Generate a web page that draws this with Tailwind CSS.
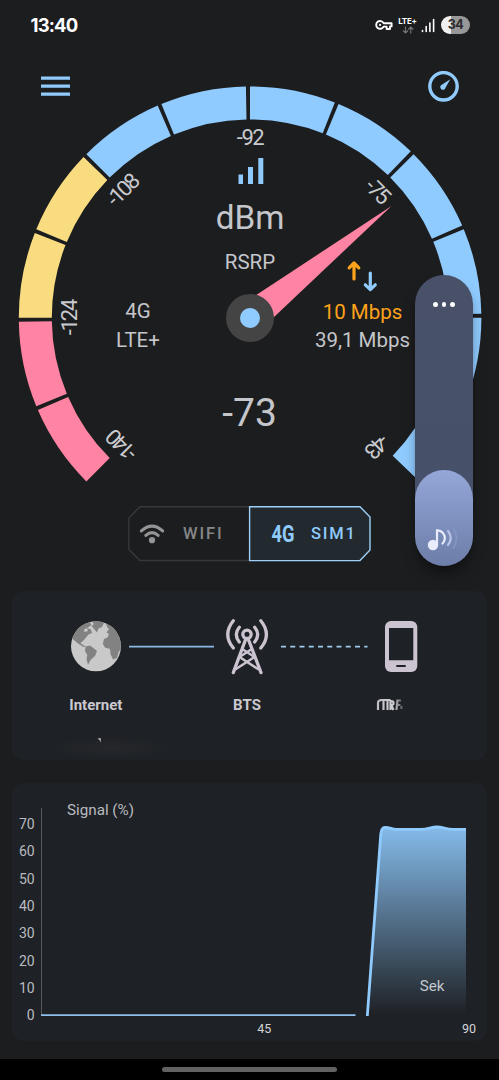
<!DOCTYPE html>
<html lang="en">
<head>
  <meta charset="UTF-8" />
  <meta name="viewport" content="width=device-width, initial-scale=1" />
  <title>Signal meter</title>
  <script src="https://cdn.jsdelivr.net/npm/@tailwindcss/browser@4"></script>
</head>
<body class="bg-[#1c1d1f] font-['Roboto',sans-serif] overflow-hidden">
  <div class="relative w-[499px] h-[1080px] flex flex-col overflow-hidden">

    <!-- Status bar -->
    <div class="h-[50px] shrink-0 flex items-center justify-between pl-[30.5px] pr-[29px]">
      <span class="font-['Inter',sans-serif] font-bold text-[18.5px] tracking-[-0.85px] text-white pt-0.5">13:40</span>
      <div class="flex items-center">
        <svg class="w-[18px] h-3 mr-[5px]" viewBox="0 0 18 12" fill="none" stroke="#fff" stroke-width="1.9" stroke-linejoin="round">
          <path d="M8.6 4.2H16.6V7.4H15V10H11.6V7.6H8.6A3.9 3.9 0 1 1 8.6 4.2Z" />
          <circle cx="5.1" cy="5.9" r="1.1" fill="#fff" stroke="none" />
        </svg>
        <div class="w-[19px] flex flex-col items-center mr-1">
          <span class="font-['Inter',sans-serif] font-bold text-[8px] leading-[8px] tracking-[-0.2px] text-white">LTE+</span>
          <svg class="w-3 h-2 mt-px" viewBox="0 0 12 8" fill="none" stroke="#777" stroke-width="1.1">
            <path d="M3.5 0.5V7M1 4.5L3.5 7L6 4.5M8.8 7.5V1M6.3 3.5L8.8 1L11.3 3.5" />
          </svg>
        </div>
        <svg class="w-[14px] h-[15px] mr-[6px]" viewBox="0 0 14 15" fill="none" stroke="#fff" stroke-width="1.6" stroke-linecap="round">
          <path d="M1.5 12.5V13.5M5.2 8.5V13.5M8.9 5V13.5M12.6 1.5V13.5" />
        </svg>
        <div class="w-[29px] h-[18px] rounded-full bg-linear-to-r from-[#f0f0f0] from-34% to-[#989898] to-34% flex items-center justify-center">
          <span class="font-['Inter',sans-serif] font-bold text-[12.5px] leading-none tracking-[-0.4px] text-[#2a2a2a]">34</span>
        </div>
      </div>
    </div>

    <!-- Header -->
    <div class="h-[58px] shrink-0 flex items-start justify-between pl-[41px] pr-10 pt-[21px]">
      <svg class="w-[29px] h-[21px] mt-[5px]" viewBox="0 0 29 21" stroke="#90cbfb" stroke-width="3.2">
        <path d="M0 2.2H29M0 10.2H29M0 18.2H29" />
      </svg>
      <svg class="w-[31px] h-[31px]" viewBox="0 0 31 31">
        <circle cx="15.5" cy="15.3" r="13.7" fill="none" stroke="#90cbfb" stroke-width="3.4" />
        <path d="M22.3 8.3L17.6 16.6A2.7 2.7 0 1 1 13.8 13.7Z" fill="#90cbfb" />
      </svg>
    </div>

    <!-- Gauge -->
    <svg class="w-[499px] h-[410px] shrink-0 -mt-7" viewBox="0 80 499 410">
      <g fill="none" stroke-width="33" stroke-dasharray="21.5 1">
        <path pathLength="45" stroke="#ff84a3" d="M98.03 469.73A214.8 214.8 0 0 1 35.3 317.8" />
        <path pathLength="45" stroke="#f9dc80" d="M35.3 317.8A214.8 214.8 0 0 1 98.03 165.87" />
        <path pathLength="180" stroke="#90cbff" d="M98.03 165.87A214.8 214.8 0 0 1 401.97 469.73" />
      </g>

      <!-- scale labels -->
      <g fill="#c9cace" font-size="22" text-anchor="middle" letter-spacing="-2.2">
        <text transform="rotate(-135 250 318)" x="250" y="145" letter-spacing="-3">-140</text>
        <text transform="rotate(-90 250 318)" x="250" y="145">-124</text>
        <text transform="rotate(-45 250 318)" x="250" y="145">-108</text>
        <text x="250" y="144.5" letter-spacing="-1.5">-92</text>
        <text transform="rotate(45 250 318)" x="250" y="145.5">-75</text>
        <text transform="rotate(135 250 318)" x="250" y="145" letter-spacing="-3">-43</text>
      </g>

      <path fill="#90cbff" d="M238.5 174.5h4.5V184h-4.5zM248 167h5V184h-5zM258.3 158h5V184h-5z" />

      <g fill="#c5c6cb" text-anchor="middle">
        <text x="250" y="228.5" font-size="33.3">dBm</text>
        <text x="250" y="269" font-size="20.5">RSRP</text>
        <text x="138" y="318.3" font-size="20.5">4G</text>
        <text x="138" y="347" font-size="20.5">LTE+</text>
        <text x="362.5" y="318.5" font-size="20.5" fill="#ffa31a">10 Mbps</text>
        <text x="362.5" y="347" font-size="20.5">39,1 Mbps</text>
        <text x="249.5" y="426.3" font-size="39">-73</text>
      </g>

      <path fill="#ff84a3" d="M391.5 206L259.8 330.4L240.2 305.6Z" />
      <circle cx="250" cy="318" r="24" fill="#444445" />
      <circle cx="250" cy="318" r="10" fill="#90cbff" />

      <g fill="none" stroke-width="3.2" stroke-linecap="round" stroke-linejoin="round">
        <path stroke="#ffa31a" d="M354 279V264M349.2 267.8L354 263L358.8 267.8" />
        <path stroke="#90cbff" d="M370.3 273V289M365.3 284.8L370.3 289.6L375.3 284.8" />
      </g>
    </svg>

    <!-- Network switch -->
    <div class="relative w-[243px] h-[56px] shrink-0 ml-[128px] mt-4 flex">
      <svg class="absolute inset-0 w-[243px] h-[56px]" viewBox="0 0 243 56" fill="none">
        <path d="M121 0.7H12L0.9 12V43.5L12 54.5H121" stroke="#37383a" stroke-width="1.4" />
        <path d="M121.6 0.7H232L242 11V44L232 54.6H121.6Z" fill="#22292f" stroke="#9fd0f7" stroke-width="1.4" />
      </svg>
      <div class="relative w-[121px] flex items-center pl-[11px]">
        <svg class="w-[26px] h-5 mr-[18px]" viewBox="0 0 26 20" fill="none" stroke="#959595" stroke-width="3.1" stroke-linecap="round">
          <path d="M2.4 6.9Q13 -2.8 23.6 6.9M6.9 11.4Q13 6 19.1 11.4" />
          <circle cx="13" cy="16.2" r="3.1" fill="#959595" stroke="none" />
        </svg>
        <span class="text-[16.5px] font-medium tracking-[1.9px] text-[#858688]">WIFI</span>
      </div>
      <div class="relative w-[122px] flex items-center pl-[20px]">
        <svg class="w-[28px] h-7 mr-[14px]" viewBox="0 0 28 28">
          <text x="2.5" y="22" font-size="23" font-weight="700" fill="#90cbfb" textLength="23" lengthAdjust="spacingAndGlyphs">4G</text>
        </svg>
        <span class="text-[16.5px] font-medium tracking-[1.8px] text-[#90cbfb]">SIM1</span>
      </div>
    </div>

    <!-- Connection path -->
    <svg class="w-[475px] h-[169px] shrink-0 ml-3 mt-[29px] rounded-[12px] bg-[#1e2125]" viewBox="12 591 475 169">
      <circle cx="96" cy="646.3" r="25" fill="#c9c9c9" />
      <g fill="#828282">
        <path d="M72.2 638.5Q75.5 629 84.5 624L90 622.2L91.5 625L88 627.5L84 629.5L84.5 632L88 631L87 628L91 629.5L92 633L88.5 634.5L85.5 638L83.5 640.5L80.5 643L83 645L86 646.2L83.5 647L78.5 643.8L75 641Z" />
        <path d="M92 621.6Q97 620.8 104 622.7L102 627L98.5 628.5L97 632.5L94 629L91.5 626L94 624Z" />
        <path d="M106 623.4Q119 629 120.8 643V649L118.7 652L117 658L113 659.5L110.5 654L110 649L105 647.5L102.8 644L104 639L107.5 637.5L109 634L106.5 632.5L109 629L107 627Z" />
        <path d="M85.5 646.5L90 645.5L94 648.5L97 651L95 656L91 659.5L88 664.8L86.5 659L87.3 655L85 651Z" />
      </g>
      <path d="M129 646.6H214" stroke="#8ab9e6" stroke-width="1.7" />
      <path d="M281 646.6H367.5" stroke="#9ecbf0" stroke-width="1.6" stroke-dasharray="5 4.25" />

      <!-- tower -->
      <g fill="none" stroke="#cbc4d0" stroke-width="3.3" stroke-linecap="round" stroke-linejoin="round">
        <circle cx="247" cy="634.3" r="4.2" />
        <path d="M245.6 639.5L233.3 672.6M248.4 639.5L261 672.6" />
        <path stroke-width="2.5" d="M243 649.5L254.5 657L236 669M251 649.5L239.5 657L258 669" />
        <path d="M239.3 627.3Q233.3 634.3 239.3 642M254.7 627.3Q260.7 634.3 254.7 642M233.3 620.8Q222.2 634.5 233.3 648M260.8 620.8Q272 634.5 260.8 648" />
      </g>

      <!-- phone -->
      <rect x="385" y="621" width="32.3" height="51" rx="6" fill="#cbc4d0" />
      <path fill="#1e2125" d="M389 628H413.3V660.3H389ZM396.3 665H405.7V667H396.3Z" />

      <g font-size="15" font-weight="700" fill="#cbc9d0" text-anchor="middle">
        <text x="95.8" y="710">Internet</text>
        <text x="247" y="710">BTS</text>
      </g>

      <!-- hidden names -->
      <defs>
        <linearGradient id="fade" x1="376" x2="405" y1="0" y2="0" gradientUnits="userSpaceOnUse">
          <stop offset="0" stop-color="#bdbcc2" />
          <stop offset="0.6" stop-color="#cfced3" />
          <stop offset="1" stop-color="#3a3c41" />
        </linearGradient>
        <radialGradient id="smudge">
          <stop offset="0" stop-color="#25272b" />
          <stop offset="1" stop-color="#25272b" stop-opacity="0" />
        </radialGradient>
      </defs>
      <path d="M378 710V703Q378 700 382 700H390.5M383.5 701V710M387.5 701V710M390.5 700V710M391 701Q394 701 393.5 704L391.5 705.5L393.5 710M396.5 710L397.5 700.5H401M397 705H400.5M401.5 706V709" fill="none" stroke="url(#fade)" stroke-width="2.2" class="blur-[0.6px]" />
      <ellipse cx="110" cy="748" rx="62" ry="11" fill="url(#smudge)" />
      <path d="M97.5 738.5L100.8 738V742.5L99.5 740Z" fill="#b5b5b7" class="blur-[0.4px]" />
    </svg>

    <!-- Signal chart -->
    <svg class="w-[475px] h-[258px] shrink-0 ml-3 mt-[23px] rounded-[12px] bg-[#1e2125]" viewBox="12 783 475 258">
      <defs>
        <linearGradient id="area" x1="0" x2="0" y1="828" y2="1015" gradientUnits="userSpaceOnUse">
          <stop offset="0" stop-color="#90cbff" stop-opacity="0.9" />
          <stop offset="1" stop-color="#90cbff" stop-opacity="0" />
        </linearGradient>
      </defs>
      <path d="M41.5 808V1015" stroke="#55575b" stroke-width="1" />
      <path d="M41 1015.2H355.5" stroke="#8fbfec" stroke-width="1.8" />
      <path fill="url(#area)" d="M367.3 1016L380.8 834Q381.5 827.5 385 827.5C391 827.5 391 829.3 397 829.3H421C428 829.3 431 827 437 827S446 829.3 453 829.3H466V1016Z" />
      <path fill="none" stroke="#90cbff" stroke-width="2.8" d="M367.3 1016L380.8 834Q381.5 827.5 385 827.5C391 827.5 391 829.3 397 829.3H421C428 829.3 431 827 437 827S446 829.3 453 829.3H466" />
      <g font-size="14" fill="#b9bbc0" text-anchor="end">
        <text x="34.7" y="829">70</text>
        <text x="34.7" y="856.3">60</text>
        <text x="34.7" y="883.6">50</text>
        <text x="34.7" y="911">40</text>
        <text x="34.7" y="938.3">30</text>
        <text x="34.7" y="965.6">20</text>
        <text x="34.7" y="993">10</text>
        <text x="34.7" y="1020.3">0</text>
      </g>
      <text x="67" y="814.7" font-size="15.2" fill="#b9bbc0">Signal (%)</text>
      <text x="419.7" y="991" font-size="15.2" fill="#c3c8ce">Sek</text>
      <g font-size="12.5" fill="#d4d6da" text-anchor="middle">
        <text x="264.3" y="1033">45</text>
        <text x="469" y="1033">90</text>
      </g>
    </svg>

    <!-- Navigation bar -->
    <div class="mt-auto h-[21px] shrink-0 bg-black flex justify-center pt-2">
      <div class="w-[175px] h-[5px] rounded-full bg-[#626262]"></div>
    </div>

    <!-- Volume panel -->
    <div class="absolute left-[415px] top-[275px] w-[58px] h-[291px] rounded-full overflow-hidden bg-linear-to-b from-[#485168] to-[#465069] shadow-lg shadow-black/40 flex flex-col justify-between">
      <div class="flex justify-center gap-[3.5px] pt-[27px]">
        <span class="size-[4.8px] rounded-full bg-white"></span>
        <span class="size-[4.8px] rounded-full bg-white"></span>
        <span class="size-[4.8px] rounded-full bg-white"></span>
      </div>
      <div class="h-24 rounded-full bg-linear-to-b from-[#94a7d8] to-[#6c7da8]">
        <svg class="w-[58px] h-24" viewBox="415 470 58 96" fill="none" stroke-linecap="round" stroke-width="2.2">
          <circle cx="433" cy="545" r="5.2" fill="#e9ecfb" />
          <path stroke="#e9ecfb" d="M437 545V530.3C442 530.3 445.5 535 444.8 539Q444.3 542 442.5 543.5" />
          <path stroke="#b9c4e6" d="M448 531Q453.5 538 448 545" />
          <path stroke="#8796c3" d="M453.5 528.5Q459.5 538 453.5 548" stroke-width="1.6" />
        </svg>
      </div>
    </div>
  </div>
</body>
</html>
